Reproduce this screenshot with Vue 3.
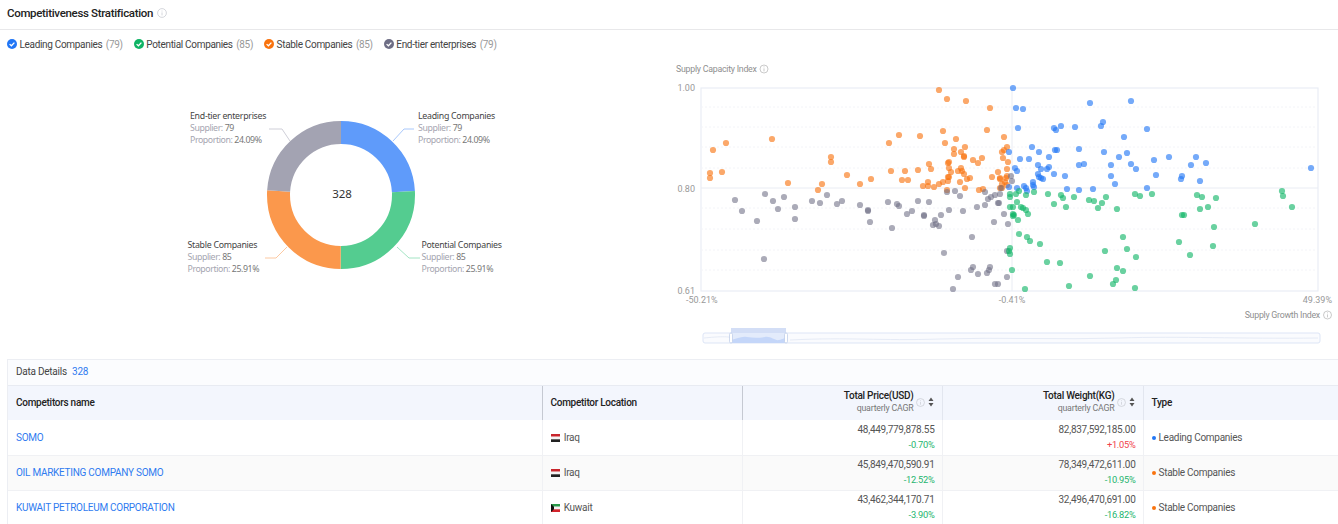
<script setup>
const colors = { blue: '#2176f5', green: '#0fb465', orange: '#f9730e', gray: '#6e6e85' }

const legend = [
  { name: 'Leading Companies', count: 79, color: colors.blue },
  { name: 'Potential Companies', count: 85, color: colors.green },
  { name: 'Stable Companies', count: 85, color: colors.orange },
  { name: 'End-tier enterprises', count: 79, color: colors.gray }
]

// donut: ring radius 62.5, colours are lighter than the legend
const circ = 2 * Math.PI * 62.5
const slices = [
  { pct: 24.09, start: 0, color: '#5f9bfa' },
  { pct: 25.91, start: 24.09, color: '#54cc90' },
  { pct: 25.91, start: 50, color: '#fb984c' },
  { pct: 24.09, start: 75.91, color: '#a3a3b2' }
].map((s) => ({
  ...s,
  dash: `${(s.pct / 100) * circ} ${circ}`,
  offset: -(s.start / 100) * circ
}))

const donutLabels = [
  { name: 'End-tier enterprises', x: 190, y: 119, sup: 79, pct: '24.09%' },
  { name: 'Leading Companies', x: 418, y: 119, sup: 79, pct: '24.09%' },
  { name: 'Stable Companies', x: 187.5, y: 248, sup: 85, pct: '25.91%' },
  { name: 'Potential Companies', x: 421.5, y: 248, sup: 85, pct: '25.91%' }
]

const leaders = [
  { d: 'M393 141L404 129H414', color: '#a9c8fb' },
  { d: 'M290 141L282 129H269', color: '#cfcfd8' },
  { d: 'M287 247L276 258H265', color: '#fcc9a2' },
  { d: 'M397 247L409 258H420', color: '#a3e4c4' }
]

const pts = {
  orange: [[939,90],[947,99],[966,101],[990,108],[987,130],[1004,137],[943,131],[956,139],[945,143],[954,149],[965,147],[961,152],[954,154],[964,157],[964,156],[973,160],[978,163],[982,158],[1002,152],[1007,147],[1003,158],[1008,162],[1007,169],[998,172],[992,177],[1000,178],[1006,178],[1007,176],[1005,182],[1000,179],[1000,188],[1002,188],[979,190],[983,189],[899,135],[889,143],[920,136],[929,164],[931,169],[891,171],[905,171],[918,170],[902,180],[908,180],[928,182],[923,186],[928,186],[934,187],[939,184],[943,182],[948,181],[948,177],[949,177],[948,163],[949,162],[949,168],[951,172],[958,171],[961,168],[962,171],[964,174],[967,179],[970,178],[960,182],[965,188],[947,190],[772,139],[726,143],[713,150],[710,173],[710,178],[722,172],[831,157],[831,162],[847,175],[788,183],[822,184],[818,190],[860,184],[871,179],[1004,150],[1007,185],[1002,184]],
  gray: [[735,200],[742,211],[757,221],[765,194],[773,201],[784,197],[778,209],[795,207],[795,219],[764,259],[812,201],[820,203],[827,195],[837,204],[842,201],[860,205],[868,210],[868,211],[870,222],[888,202],[897,204],[899,206],[907,214],[912,211],[918,201],[929,202],[924,216],[924,215],[935,220],[933,225],[936,224],[939,226],[941,215],[892,228],[949,210],[963,211],[977,207],[985,205],[988,199],[991,197],[995,195],[1000,194],[999,203],[998,203],[1004,214],[994,222],[1008,224],[972,237],[944,253],[1007,251],[973,267],[971,270],[978,274],[987,273],[990,267],[989,270],[1007,277],[958,277],[953,289],[995,284],[998,284],[947,192],[955,191],[960,196],[985,192],[1001,188],[1011,176],[1012,181]],
  blue: [[1013,88],[1016,108],[1023,109],[1018,128],[1090,103],[1131,101],[1103,122],[1101,126],[1054,128],[1056,130],[1061,126],[1075,127],[1147,129],[1124,137],[1032,147],[1009,152],[1039,152],[1055,150],[1057,150],[1079,149],[1104,152],[1127,153],[1119,157],[1049,157],[1020,159],[1029,159],[1169,157],[1154,160],[1196,157],[1206,163],[1191,165],[1311,168],[1038,165],[1041,169],[1047,169],[1049,167],[1079,165],[1084,164],[1111,165],[1131,164],[1136,169],[1015,168],[1017,171],[1038,174],[1039,177],[1041,178],[1043,179],[1054,174],[1065,176],[1111,176],[1156,175],[1182,176],[1181,179],[1200,181],[1115,184],[1147,188],[1093,189],[1079,190],[1067,189],[1033,182],[1033,185],[1034,187],[1024,186],[1026,188],[1027,191],[1017,188],[1009,187]],
  green: [[1048,194],[1061,195],[1063,198],[1074,197],[1106,197],[1135,194],[1140,196],[1152,194],[1197,195],[1202,197],[1216,198],[1282,191],[1283,196],[1292,207],[1208,207],[1200,209],[1182,215],[1184,215],[1214,227],[1255,224],[1089,200],[1094,201],[1102,203],[1098,208],[1117,209],[1054,204],[1066,207],[1026,195],[1034,192],[1019,191],[1016,194],[1010,194],[1010,197],[1017,202],[1010,207],[1013,207],[1021,207],[1023,208],[1026,210],[1028,214],[1013,214],[1014,215],[1013,216],[1018,220],[1019,234],[1027,237],[1030,241],[1040,244],[1123,237],[1127,249],[1105,251],[1136,257],[1179,242],[1213,246],[1190,255],[1047,262],[1060,263],[1117,268],[1123,271],[1012,270],[1090,276],[1116,280],[1113,284],[1069,286],[1135,288],[1025,289],[1010,248],[1009,251],[1010,254]]
}
const drawOrder = ['orange', 'gray', 'blue', 'green']
const gridAbove = [107, 127, 147, 168]
const gridBelow = [208, 229, 250, 270]

const rows = [
  { name: 'SOMO', loc: 'Iraq', flag: 'iq', price: '48,449,779,878.55', priceCagr: '-0.70%', weight: '82,837,592,185.00', weightCagr: '+1.05%', type: 'Leading Companies', color: colors.blue },
  { name: 'OIL MARKETING COMPANY SOMO', loc: 'Iraq', flag: 'iq', price: '45,849,470,590.91', priceCagr: '-12.52%', weight: '78,349,472,611.00', weightCagr: '-10.95%', type: 'Stable Companies', color: colors.orange },
  { name: 'KUWAIT PETROLEUM CORPORATION', loc: 'Kuwait', flag: 'kw', price: '43,462,344,170.71', priceCagr: '-3.90%', weight: '32,496,470,691.00', weightCagr: '-16.82%', type: 'Stable Companies', color: colors.orange }
]

const isUp = (v) => v.startsWith('+')
</script>

<template>
  <div class="page">
    <div class="title-bar">
      <h2>Competitiveness Stratification</h2>
      <svg class="info" viewBox="0 0 10 10"><circle cx="5" cy="5" r="4.4" /><path d="M5 4.4v3M5 2.6v.9" /></svg>
    </div>

    <div class="legend">
      <div v-for="l in legend" :key="l.name" class="legend-item">
        <svg class="check" viewBox="0 0 10 10">
          <circle cx="5" cy="5" r="5" :fill="l.color" />
          <path d="M2.6 5.1l1.8 1.7 3-3.2" fill="none" stroke="#fff" stroke-width="1.3" />
        </svg>
        <span>{{ l.name }}</span>
        <span class="count">({{ l.count }})</span>
      </div>
    </div>

    <div class="charts">
      <svg class="donut" viewBox="0 58 660 292" width="660" height="292">
        <circle
          v-for="s in slices"
          :key="s.start"
          cx="341"
          cy="195"
          r="62.5"
          fill="none"
          stroke-width="23"
          :stroke="s.color"
          :stroke-dasharray="s.dash"
          :stroke-dashoffset="s.offset"
          transform="rotate(-90 341 195)"
        />
        <path v-for="l in leaders" :key="l.d" :d="l.d" fill="none" :stroke="l.color" />
        <text x="342" y="198" text-anchor="middle" class="total">328</text>
        <g v-for="d in donutLabels" :key="d.name">
          <text :x="d.x" :y="d.y" class="d-name">{{ d.name }}</text>
          <text :x="d.x" :y="d.y + 12" class="d-sub">Supplier: <tspan class="d-val">{{ d.sup }}</tspan></text>
          <text :x="d.x" :y="d.y + 24" class="d-sub">Proportion: <tspan class="d-val">{{ d.pct }}</tspan></text>
        </g>
      </svg>

      <svg class="scatter" viewBox="660 58 678 292" width="678" height="292">
        <text x="676" y="72" class="axis-name">Supply Capacity Index</text>
        <g class="mini-info"><circle cx="764" cy="69" r="4" /><path d="M764 68.4v3M764 66.4v.9" /></g>

        <rect x="701" y="88" width="617" height="203" fill="none" stroke="#e9edf5" stroke-width="1.2" />
        <line v-for="y in gridAbove" :key="y" x1="701" x2="1318" :y1="y" :y2="y" class="dash" />
        <line v-for="y in gridBelow" :key="y" x1="701" x2="1318" :y1="y" :y2="y" class="dash" />
        <line x1="701" x2="1318" y1="188" y2="188" class="mid" />
        <line x1="1012" x2="1012" y1="88" y2="291" class="mid" />

        <g v-for="k in drawOrder" :key="k" :fill="colors[k]" :fill-opacity="k === 'gray' ? 0.58 : 0.62">
          <circle v-for="(p, i) in pts[k]" :key="i" :cx="p[0]" :cy="p[1]" r="3.1" />
        </g>

        <text x="695" y="91" text-anchor="end" class="tick">1.00</text>
        <text x="695" y="192" text-anchor="end" class="tick">0.80</text>
        <text x="695" y="294" text-anchor="end" class="tick">0.61</text>
        <text x="686" y="303" class="tick">-50.21%</text>
        <text x="1012" y="303" text-anchor="middle" class="tick">-0.41%</text>
        <text x="1332" y="303" text-anchor="end" class="tick">49.39%</text>
        <text x="1320" y="318" text-anchor="end" class="axis-name">Supply Growth Index</text>
        <g class="mini-info"><circle cx="1327.5" cy="315" r="4" /><path d="M1327.5 314.4v3M1327.5 312.4v.9" /></g>

        <!-- range slider -->
        <rect x="703" y="333" width="617" height="10" rx="2" fill="#fafbfe" stroke="#dde5f6" />
        <path d="M704 338c30-3 30 0 27 3M790 340c60-3 90 1 150-1s120 1 180-1 120 1 198 0" fill="none" stroke="#e6ebf6" />
        <rect x="731" y="333" width="55" height="10" fill="#e3ebfb" />
        <rect x="731" y="328" width="55" height="5" fill="#d3def6" />
        <path d="M731 343v-3c6-1 10-4 16-3s12 1 18 0 10 4 14 3 5-2 7-2v5z" fill="#c4d6f9" />
        <rect x="729.5" y="333" width="3" height="10" rx="1.5" fill="#fff" stroke="#b9c8e6" stroke-width="0.7" />
        <rect x="784.5" y="333" width="3" height="10" rx="1.5" fill="#fff" stroke="#b9c8e6" stroke-width="0.7" />
      </svg>
    </div>

    <div class="details">
      <div class="details-head">Data Details <span class="details-num">328</span></div>
      <table>
        <colgroup>
          <col style="width: 534px" />
          <col style="width: 200px" />
          <col style="width: 200px" />
          <col style="width: 201px" />
          <col />
        </colgroup>
        <thead>
          <tr>
            <th>Competitors name</th>
            <th class="fixed-end">Competitor Location</th>
            <th class="num">
              <div class="th-num">
                <div>
                  <div>Total Price(USD)</div>
                  <div class="sub">quarterly CAGR</div>
                </div>
                <svg class="info small" viewBox="0 0 10 10"><circle cx="5" cy="5" r="4.4" /><path d="M5 4.4v3M5 2.6v.9" /></svg>
                <svg class="sort" viewBox="0 0 6 10"><path d="M3 .5L5.5 4h-5zM3 9.5L.5 6h5z" /></svg>
              </div>
            </th>
            <th class="num">
              <div class="th-num">
                <div>
                  <div>Total Weight(KG)</div>
                  <div class="sub">quarterly CAGR</div>
                </div>
                <svg class="info small" viewBox="0 0 10 10"><circle cx="5" cy="5" r="4.4" /><path d="M5 4.4v3M5 2.6v.9" /></svg>
                <svg class="sort" viewBox="0 0 6 10"><path d="M3 .5L5.5 4h-5zM3 9.5L.5 6h5z" /></svg>
              </div>
            </th>
            <th>Type</th>
          </tr>
        </thead>
        <tbody>
          <tr v-for="r in rows" :key="r.name">
            <td><a class="link">{{ r.name }}</a></td>
            <td class="fixed-end">
              <svg class="flag" viewBox="0 0 9 8">
                <template v-if="r.flag === 'iq'">
                  <rect width="9" height="2.7" fill="#c8252c" />
                  <rect y="2.7" width="9" height="2.6" fill="#f4f4f4" />
                  <rect y="5.3" width="9" height="2.7" fill="#222" />
                </template>
                <template v-else>
                  <rect width="9" height="2.7" fill="#2a9a4a" />
                  <rect y="2.7" width="9" height="2.6" fill="#f4f4f4" />
                  <rect y="5.3" width="9" height="2.7" fill="#d3242c" />
                  <path d="M0 0l3 2.7v2.6L0 8z" fill="#111" />
                </template>
              </svg>
              {{ r.loc }}
            </td>
            <td class="num">
              <div>{{ r.price }}</div>
              <div class="cagr" :class="{ up: isUp(r.priceCagr) }">{{ r.priceCagr }}</div>
            </td>
            <td class="num">
              <div>{{ r.weight }}</div>
              <div class="cagr" :class="{ up: isUp(r.weightCagr) }">{{ r.weightCagr }}</div>
            </td>
            <td><span class="dot" :style="{ background: r.color }"></span>{{ r.type }}</td>
          </tr>
        </tbody>
      </table>
    </div>
  </div>
</template>

<style>
html, body {
  background: #fff;
  overflow: hidden;
}
</style>

<style scoped>
.page {
  width: 1338px;
  height: 524px;
  overflow: hidden;
  font-family: Roboto, "Liberation Sans", sans-serif;
  color: #333;
}

.title-bar {
  height: 30px;
  box-sizing: border-box;
  padding: 0 0 3px 7px;
  display: flex;
  align-items: center;
  gap: 4px;
  border-bottom: 1px solid #e8e8ea;
}

.title-bar h2 {
  margin: 0;
  font-size: 11.5px;
  font-weight: 500;
  letter-spacing: -0.32px;
  color: #222;
}

.info {
  width: 10px;
  height: 10px;
  fill: none;
  stroke: #c9ccd3;
  stroke-width: 0.8;
}

.info.small {
  flex: none;
  width: 9px;
  height: 9px;
}

.legend {
  height: 28px;
  padding-left: 7px;
  display: flex;
  align-items: center;
  gap: 11px;
  font-size: 10px;
  letter-spacing: -0.32px;
  color: #444;
}

.legend-item {
  display: flex;
  align-items: center;
  gap: 2.5px;
}

.count {
  color: #999;
  margin-left: 1px;
}

.check {
  width: 10px;
  height: 10px;
}

.charts {
  display: flex;
  height: 301px;
}

.charts svg {
  display: block;
  flex: none;
}

.total {
  font-family: "Noto Sans", sans-serif;
  font-size: 11.5px;
  fill: #333;
}

.d-name {
  font-family: "Noto Sans", sans-serif;
  font-size: 8.8px;
  letter-spacing: -0.28px;
  fill: #444;
}

.d-sub {
  font-family: "Noto Sans", sans-serif;
  font-size: 8.8px;
  letter-spacing: -0.42px;
  fill: #a5a5b0;
}

.d-val {
  fill: #777;
}

.axis-name {
  font-size: 8.8px;
  letter-spacing: -0.25px;
  fill: #8f8f8f;
}

.tick {
  font-size: 9px;
  fill: #999;
}

.mini-info {
  fill: none;
  stroke: #b5b5b5;
  stroke-width: 0.7;
}

.dash {
  stroke: #f3f4f8;
  stroke-dasharray: 2 2;
}

.mid {
  stroke: #e9ecf3;
}

.details {
  margin-left: 7px;
  border-left: 1px solid #eceef3;
}

.details-head {
  height: 27px;
  line-height: 23px;
  box-sizing: border-box;
  padding-left: 8px;
  font-size: 10px;
  letter-spacing: -0.25px;
  color: #444;
  background: #fbfcfe;
  border-top: 1px solid #eceef3;
  border-bottom: 1px solid #e8ebf2;
}

.details-num {
  color: #2f7bf0;
  margin-left: 3px;
}

table {
  width: 1331px;
  table-layout: fixed;
  border-collapse: collapse;
  font-size: 10px;
  letter-spacing: -0.27px;
}

th {
  height: 34px;
  padding: 0 8px 2px;
  box-sizing: border-box;
  background: #f3f6fd;
  text-align: left;
  font-weight: 500;
  color: #222;
  border-right: 1px solid #e2e6ef;
}

th.fixed-end {
  border-right: 1px solid #c5c9d2;
}

th:first-child {
  border-right: 1px solid #c5c9d2;
}

td {
  height: 35px;
  padding: 0 8px;
  box-sizing: border-box;
  color: #555;
  border-right: 1px solid #f0f1f4;
  border-bottom: 1px solid #f0f1f4;
}

tbody tr:nth-child(2) td {
  background: #fafafa;
}

td.num {
  text-align: right;
  line-height: 14px;
  padding-right: 7px;
}

th.num {
  padding-right: 8px;
}

.th-num {
  display: flex;
  justify-content: flex-end;
  align-items: center;
  gap: 2px;
  line-height: 13px;
}

.th-num > div {
  text-align: right;
}

.sub {
  font-size: 8.8px;
  font-weight: 400;
  letter-spacing: -0.2px;
  color: #777;
}

.sort {
  width: 6px;
  height: 10px;
  fill: #555;
  margin: 0 0 0 1px;
}

.cagr {
  font-size: 9.3px;
  line-height: 15px;
  color: #24b56e;
}

.cagr.up {
  color: #f0414b;
}

.link {
  color: #2f7bf0;
}

.flag {
  width: 9px;
  height: 8px;
  margin-right: 2px;
  vertical-align: -1px;
}

.dot {
  display: inline-block;
  width: 4px;
  height: 4px;
  border-radius: 50%;
  margin-right: 3px;
  vertical-align: 1px;
}
</style>
